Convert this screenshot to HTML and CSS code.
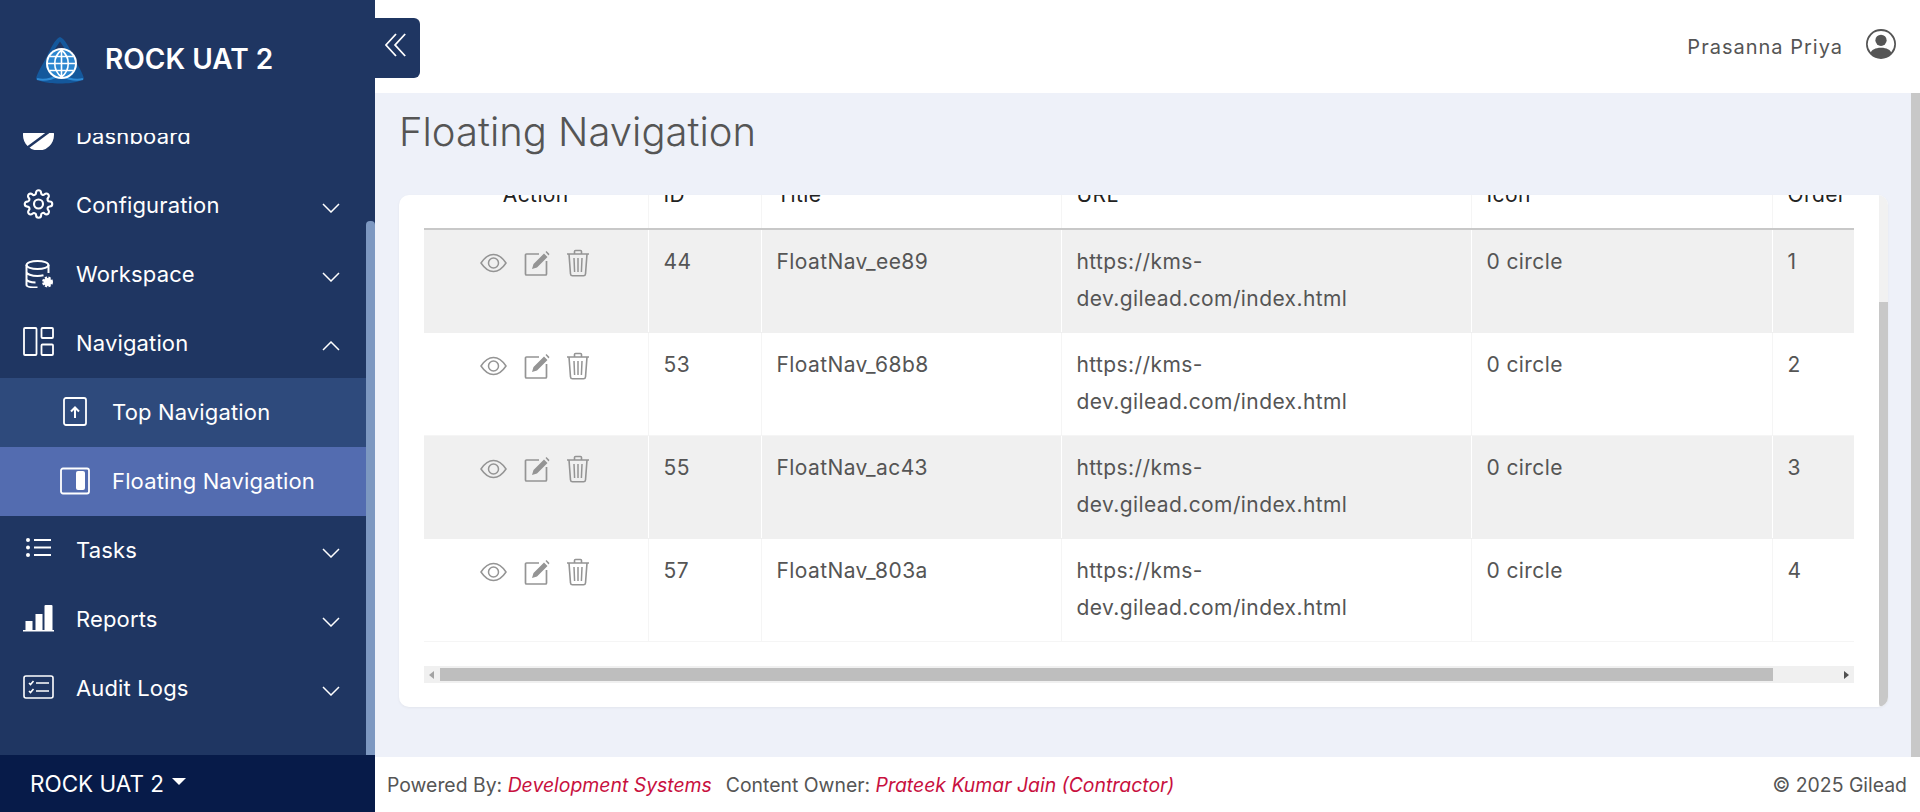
FILE: index.html
```html
<!DOCTYPE html>
<html>
<head>
    <title>Floating Navigation</title>
    <meta name="viewport" content="width=device-width, initial-scale=1">
    <link rel="stylesheet" href="styles.css">
</head>

<body>
    <svg class="sprite">
        <symbol id="eye" viewBox="0 0 27 20">
            <path d="M1 10C5 4 9 1.500 13.500 1.500S22 4 26 10c-4 6-8 8.500-12.500 8.500S5 16 1 10z" fill="none" stroke="currentColor" stroke-width="1.500"/>
            <circle cx="13.500" cy="10" r="5" fill="none" stroke="currentColor" stroke-width="1.500"/>
        </symbol>
        <symbol id="edit" viewBox="0 0 26 26">
            <path d="M15 4H2.500a1 1 0 0 0-1 1v19a1 1 0 0 0 1 1h19a1 1 0 0 0 1-1V11" fill="none" stroke="currentColor" stroke-width="1.700"/>
            <path d="M8 19l1.500-5L20 3.500l3.500 3.500L13 17.500z M21.500 2l1-1 3 3-1 1.500z" fill="currentColor"/>
        </symbol>
        <symbol id="trash" viewBox="0 0 24 28">
            <path d="M1 5h22M8.500 5V2.500a1 1 0 0 1 1-1h5a1 1 0 0 1 1 1V5M3 5l1.500 20a2 2 0 0 0 2 1.800h11a2 2 0 0 0 2-1.800L21 5" fill="none" stroke="currentColor" stroke-width="1.600"/>
            <path d="M8 9l.6 14M12 9v14M16 9l-.6 14" fill="none" stroke="currentColor" stroke-width="1.500"/>
        </symbol>
        <symbol id="chev-down" viewBox="0 0 18 10">
            <path d="M1 1l8 8 8-8" fill="none" stroke="currentColor" stroke-width="1.500"/>
        </symbol>
    </svg>

    <div class="app">
        <aside class="sidebar">
            <div class="brand">
                <svg class="brand-logo" viewBox="0 0 48 48">
                    <path d="M24 1C29 3 33 11 37 20c4 8 10 17 11 23-8 4-16 4.500-24 4.500S8 47 0 43c1-6 7-15 11-23S19 3 24 1z" fill="#14589c"/>
                    <path d="M24 5.500L15 19h18z" fill="#1f3662"/>
                    <path d="M1 43c7 2 15 0 23-4 8 4 16 6 23 4" fill="none" stroke="#2f8bd6" stroke-width="2"/>
                    <circle cx="25.500" cy="27.500" r="15.500" fill="#fff"/>
                    <circle cx="25.500" cy="27.500" r="13.500" fill="#2b86cf"/>
                    <path d="M12 27.500h27M14 20.500h23M14 34.500h23M25.500 14v27M25.500 14c-9 7-9 20 0 27M25.500 14c9 7 9 20 0 27" fill="none" stroke="#fff" stroke-width="1.600"/>
                </svg>
                <span class="brand-name">ROCK UAT 2</span>
            </div>

            <div class="nav-wrap">
                <ul class="nav">
                    <li class="nav-item">
                        <svg class="nav-icon" viewBox="0 0 31 30"><circle cx="15.500" cy="15" r="15.500" fill="#fff"/><path d="M4 28L27 11" stroke="#1f3662" stroke-width="2.500"/></svg>
                        <span class="nav-label">Dashboard</span>
                    </li>
                    <li class="nav-item">
                        <svg class="nav-icon" viewBox="0 0 24 24" fill="none" stroke="#fff" stroke-width="1.700"><circle cx="12" cy="12" r="3.600"/><path d="M19.400 15a1.650 1.650 0 0 0 .33 1.820l.06.06a2 2 0 0 1 0 2.830 2 2 0 0 1-2.830 0l-.06-.06a1.650 1.650 0 0 0-1.820-.33 1.650 1.650 0 0 0-1 1.510V21a2 2 0 0 1-2 2 2 2 0 0 1-2-2v-.09A1.650 1.650 0 0 0 9 19.400a1.650 1.650 0 0 0-1.820.33l-.06.06a2 2 0 0 1-2.830 0 2 2 0 0 1 0-2.830l.06-.06a1.650 1.650 0 0 0 .33-1.820 1.650 1.650 0 0 0-1.510-1H3a2 2 0 0 1-2-2 2 2 0 0 1 2-2h.09A1.650 1.650 0 0 0 4.600 9a1.650 1.650 0 0 0-.33-1.820l-.06-.06a2 2 0 0 1 0-2.830 2 2 0 0 1 2.830 0l.06.06a1.650 1.650 0 0 0 1.820.33H9a1.650 1.650 0 0 0 1-1.510V3a2 2 0 0 1 2-2 2 2 0 0 1 2 2v.09a1.650 1.650 0 0 0 1 1.510 1.650 1.650 0 0 0 1.820-.33l.06-.06a2 2 0 0 1 2.830 0 2 2 0 0 1 0 2.830l-.06.06a1.650 1.650 0 0 0-.33 1.820V9a1.650 1.650 0 0 0 1.510 1H21a2 2 0 0 1 2 2 2 2 0 0 1-2 2h-.09a1.650 1.650 0 0 0-1.510 1z"/></svg>
                        <span class="nav-label">Configuration</span>
                        <svg class="chev"><use href="#chev-down"/></svg>
                    </li>
                    <li class="nav-item">
                        <svg class="nav-icon" viewBox="0 0 31 30" fill="none" stroke="#fff" stroke-width="2"><ellipse cx="14.500" cy="7" rx="11" ry="4"/><path d="M3.500 7v20c0 1.500 4 2.500 11 2.500M25.500 7v8M3.500 14c0 2 5 4 11 4 2 0 4-.2 6-.7M3.500 21c0 2 4 3.500 9 3.500"/><circle cx="24.500" cy="24" r="4" fill="#fff" stroke="#fff" stroke-width="3" stroke-dasharray="2 1.200"/></svg>
                        <span class="nav-label">Workspace</span>
                        <svg class="chev"><use href="#chev-down"/></svg>
                    </li>
                    <li class="nav-item">
                        <svg class="nav-icon" viewBox="0 0 31 30" fill="none" stroke="#fff" stroke-width="1.800"><rect x="1" y="1" width="12.500" height="27" rx="1"/><rect x="18.500" y="1" width="11.500" height="10" rx="1"/><rect x="18.500" y="17.500" width="11.500" height="10.500" rx="1"/></svg>
                        <span class="nav-label">Navigation</span>
                        <svg class="chev chev-up"><use href="#chev-down"/></svg>
                    </li>
                    <li class="nav-item sub">
                        <svg class="nav-icon" viewBox="0 0 30 30" fill="none" stroke="#fff" stroke-width="1.800"><rect x="4" y="2" width="22" height="27" rx="2"/><path d="M15 22V12M11 15.500L15 11.500l4 4" stroke-width="2"/></svg>
                        <span class="nav-label">Top Navigation</span>
                    </li>
                    <li class="nav-item sub active">
                        <svg class="nav-icon" viewBox="0 0 30 30" fill="none" stroke="#fff" stroke-width="1.800"><rect x="1" y="3.500" width="28" height="25" rx="2"/><rect x="16" y="6" width="9" height="19" rx="2" fill="#fff" stroke="none"/></svg>
                        <span class="nav-label">Floating Navigation</span>
                    </li>
                    <li class="nav-item">
                        <svg class="nav-icon" viewBox="0 0 31 30" fill="#fff"><circle cx="5" cy="6" r="2"/><circle cx="5" cy="13.500" r="2"/><circle cx="5" cy="21" r="2"/><rect x="11" y="5" width="17" height="2"/><rect x="11" y="12.500" width="17" height="2"/><rect x="11" y="20" width="17" height="2"/></svg>
                        <span class="nav-label">Tasks</span>
                        <svg class="chev"><use href="#chev-down"/></svg>
                    </li>
                    <li class="nav-item">
                        <svg class="nav-icon" viewBox="0 0 31 30" fill="#fff"><rect x="2.500" y="18" width="7" height="10"/><rect x="12.500" y="11" width="7" height="17"/><rect x="21.500" y="2" width="8" height="26" rx="1"/><rect x="0" y="27" width="31" height="1.500"/></svg>
                        <span class="nav-label">Reports</span>
                        <svg class="chev"><use href="#chev-down"/></svg>
                    </li>
                    <li class="nav-item">
                        <svg class="nav-icon" viewBox="0 0 31 30" fill="none" stroke="#fff" stroke-width="1.600"><rect x="1" y="4" width="29" height="22" rx="2"/><path d="M13 11h13M13 19h13M6 11l1.500 1.500L10.500 9M6 19l1.500 1.500L10.500 17"/></svg>
                        <span class="nav-label">Audit Logs</span>
                        <svg class="chev"><use href="#chev-down"/></svg>
                    </li>
                </ul>
                <div class="nav-rail"><div class="nav-thumb"></div></div>
            </div>

            <div class="env">ROCK UAT 2<span class="caret"></span></div>
        </aside>

        <button class="toggle">
            <svg viewBox="0 0 24 26" fill="none" stroke="#fff" stroke-width="2"><path d="M12 1L1 13l11 12M22 1L11 13l11 12"/></svg>
        </button>

        <main class="main">
            <header class="topbar">
                <span class="user-name">Prasanna Priya</span>
                <svg class="user-icon" viewBox="0 0 16 16" fill="#555"><path d="M11 6a3 3 0 1 1-6 0 3 3 0 0 1 6 0z"/><path fill-rule="evenodd" d="M0 8a8 8 0 1 1 16 0A8 8 0 0 1 0 8zm8-7a7 7 0 0 0-5.468 11.37C3.242 11.226 4.805 10 8 10s4.757 1.225 5.468 2.37A7 7 0 0 0 8 1z"/></svg>
            </header>

            <div class="content-wrap">
                <div class="content">
                    <h1 class="page-title">Floating Navigation</h1>
                    <div class="card">
                        <div class="card-body">
                            <div class="table-clip">
                                <table class="grid">
                                    <colgroup>
                                        <col class="c-action"><col class="c-id"><col class="c-title"><col class="c-url"><col class="c-icon"><col class="c-order">
                                    </colgroup>
                                    <thead>
                                        <tr><th class="center">Action</th><th>ID</th><th>Title</th><th>URL</th><th>Icon</th><th>Order</th></tr>
                                    </thead>
                                    <tbody>
                                        <tr>
                                            <td><div class="actions"><svg class="a-eye"><use href="#eye"/></svg><svg class="a-edit"><use href="#edit"/></svg><svg class="a-trash"><use href="#trash"/></svg></div></td>
                                            <td>44</td><td>FloatNav_ee89</td><td>https://kms-<br>dev.gilead.com/index.html</td><td>0 circle</td><td>1</td>
                                        </tr>
                                        <tr>
                                            <td><div class="actions"><svg class="a-eye"><use href="#eye"/></svg><svg class="a-edit"><use href="#edit"/></svg><svg class="a-trash"><use href="#trash"/></svg></div></td>
                                            <td>53</td><td>FloatNav_68b8</td><td>https://kms-<br>dev.gilead.com/index.html</td><td>0 circle</td><td>2</td>
                                        </tr>
                                        <tr>
                                            <td><div class="actions"><svg class="a-eye"><use href="#eye"/></svg><svg class="a-edit"><use href="#edit"/></svg><svg class="a-trash"><use href="#trash"/></svg></div></td>
                                            <td>55</td><td>FloatNav_ac43</td><td>https://kms-<br>dev.gilead.com/index.html</td><td>0 circle</td><td>3</td>
                                        </tr>
                                        <tr>
                                            <td><div class="actions"><svg class="a-eye"><use href="#eye"/></svg><svg class="a-edit"><use href="#edit"/></svg><svg class="a-trash"><use href="#trash"/></svg></div></td>
                                            <td>57</td><td>FloatNav_803a</td><td>https://kms-<br>dev.gilead.com/index.html</td><td>0 circle</td><td>4</td>
                                        </tr>
                                    </tbody>
                                </table>
                            </div>
                            <div class="hscroll">
                                <span class="arrow-left"></span>
                                <div class="hscroll-thumb"></div>
                                <span class="arrow-right"></span>
                            </div>
                        </div>
                        <div class="card-rail"><div class="card-thumb"></div></div>
                    </div>
                </div>
                <div class="page-rail"></div>
            </div>

            <footer class="footer">
                <span>Powered By: <em>Development Systems</em></span>
                <span class="owner">Content Owner: <em>Prateek Kumar Jain (Contractor)</em></span>
                <span class="copy">© 2025 Gilead</span>
            </footer>
        </main>
    </div>
</body>
</html>
```

FILE: styles.css
```css
html, body {
    margin: 0;
    padding: 0;
    height: 100%;
}
body {
    font-family: "Inter", "Liberation Sans", sans-serif;
    color: #555;
    overflow: hidden;
}
.sprite {
    display: none;
}
.app {
    display: flex;
    height: 812px;
    position: relative;
}

/* sidebar */
.sidebar {
    width: 375px;
    flex: none;
    display: flex;
    flex-direction: column;
    background-color: #1f3662;
    color: #fff;
}
.brand {
    height: 133px;
    flex: none;
    display: flex;
    align-items: flex-start;
    padding: 36px 0 0 36px;
    box-sizing: border-box;
}
.brand-logo {
    width: 48px;
    height: 48px;
    flex: none;
}
.brand-name {
    margin-left: 21px;
    font-size: 28px;
    font-weight: 600;
    line-height: 46px;
}
.nav-wrap {
    flex: 1;
    display: flex;
    min-height: 0;
    overflow: hidden;
}
.nav {
    flex: 1;
    list-style: none;
    margin: -31px 0 0;
    padding: 0;
}
.nav-item {
    height: 69px;
    display: flex;
    align-items: center;
    padding-left: 23px;
    font-size: 22px;
    letter-spacing: .15px;
}
.nav-icon {
    width: 31px;
    height: 30px;
    flex: none;
    margin: -3px 22px 0 0;
}
.nav-label {
    flex: 1;
    margin-top: -1px;
}
.chev {
    width: 18px;
    height: 10px;
    margin: 4px 26px 0 0;
    color: #fff;
}
.chev-up {
    transform: rotate(180deg);
}
.sub {
    background-color: #2e4a7c;
    padding-left: 60px;
}
.sub .nav-icon {
    width: 30px;
    margin-right: 22px;
}
.sub.active {
    background-color: #536cb0;
}
.nav-rail {
    width: 9px;
    flex: none;
    padding-top: 88px;
}
.nav-thumb {
    height: 100%;
    background-color: #7d98c1;
    border-radius: 4px 4px 0 0;
}
.env {
    height: 57px;
    flex: none;
    display: flex;
    align-items: center;
    padding-left: 30px;
    background-color: #071b49;
    font-size: 22.500px;
}
.caret {
    margin: 0 0 5px 8px;
    border-left: 7px solid transparent;
    border-right: 7px solid transparent;
    border-top: 7px solid #fff;
}
.toggle {
    position: absolute;
    left: 375px;
    top: 18px;
    width: 45px;
    height: 60px;
    padding: 0;
    border: none;
    border-radius: 0 6px 6px 0;
    background-color: #1f3662;
}
.toggle svg {
    display: block;
    width: 22px;
    height: 26px;
    margin: -6px 0 0 10px;
}

/* main area */
.main {
    flex: 1;
    min-width: 0;
    display: flex;
    flex-direction: column;
}
.topbar {
    height: 93px;
    flex: none;
    display: flex;
    align-items: flex-start;
    justify-content: flex-end;
    box-sizing: border-box;
    padding: 29px 24px 0 0;
    background-color: #fff;
}
.user-name {
    font-size: 20px;
    line-height: 36px;
    letter-spacing: 1px;
    color: #555;
}
.user-icon {
    width: 30px;
    height: 30px;
    margin-left: 23px;
}
.content-wrap {
    flex: 1;
    min-height: 0;
    display: flex;
    background-color: #eef1f9;
}
.content {
    flex: 1;
    min-width: 0;
    padding: 0 23px 0 24px;
}
.page-title {
    margin: 0;
    height: 102px;
    box-sizing: border-box;
    padding-top: 16px;
    font-size: 40px;
    line-height: 46px;
    font-weight: 300;
    color: #555;
}
.page-rail {
    width: 9px;
    flex: none;
    background-color: #c8c8c8;
}
.card {
    height: 512px;
    display: flex;
    background-color: #fff;
    border-radius: 10px;
    overflow: hidden;
    box-shadow: 0 1px 3px rgba(0, 0, 0, .05);
}
.card-body {
    flex: 1;
    min-width: 0;
    padding: 0 25px 0 25px;
}
.card-rail {
    width: 9px;
    flex: none;
    padding-top: 107px;
    background-color: #f1f1f1;
}
.card-thumb {
    height: 100%;
    background-color: #c8c8c8;
    border-radius: 0 0 4px 4px;
}
.table-clip {
    height: 471px;
    overflow: hidden;
}
.grid {
    width: 1498px;
    margin-top: -18px;
    table-layout: fixed;
    border-collapse: collapse;
    font-size: 21px;
    line-height: 36.500px;
    letter-spacing: .4px;
}
.c-action { width: 224px; }
.c-id { width: 113px; }
.c-title { width: 300px; }
.c-url { width: 410px; }
.c-icon { width: 301px; }
.c-order { width: 150px; }
.grid th {
    padding: 0 15px 14.500px;
    font-weight: 400;
    text-align: left;
    color: #222;
    border-right: 1px solid #f5f5f5;
    border-bottom: 2px solid #c8c8c8;
}
.grid th.center {
    text-align: center;
}
.grid td {
    height: 73px;
    padding: 14px 15px 15px;
    vertical-align: top;
    border-right: 1px solid #f5f5f5;
    border-bottom: 1px solid #f5f5f5;
}
.grid tbody tr:nth-child(odd) td {
    background-color: #f0f0f0;
    border-right-color: #fff;
    border-bottom-color: #f0f0f0;
}
.actions {
    display: flex;
    align-items: center;
    gap: 16px;
    padding: 5px 0 0 41px;
    color: #949494;
}
.a-eye { width: 27px; height: 20px; margin-right: 1px; }
.a-edit { width: 26px; height: 26px; }
.a-trash { width: 24px; height: 28px; }
.hscroll {
    height: 17px;
    display: flex;
    align-items: center;
    background-color: #f0f0f0;
}
.arrow-left {
    margin: 0 6px 0 5px;
    border-top: 4px solid transparent;
    border-bottom: 4px solid transparent;
    border-right: 5px solid #a3a3a3;
}
.hscroll-thumb {
    width: 1333px;
    height: 13px;
    background-color: #bebebe;
}
.arrow-right {
    margin-left: auto;
    margin-right: 5px;
    border-top: 4px solid transparent;
    border-bottom: 4px solid transparent;
    border-left: 5px solid #505050;
}
.footer {
    height: 55px;
    flex: none;
    display: flex;
    align-items: center;
    padding: 0 13px 0 12px;
    background-color: #fff;
    font-size: 19.400px;
    color: #555;
}
.footer em {
    color: #c8103e;
}
.owner {
    margin-left: 14px;
}
.copy {
    margin-left: auto;
}
```
